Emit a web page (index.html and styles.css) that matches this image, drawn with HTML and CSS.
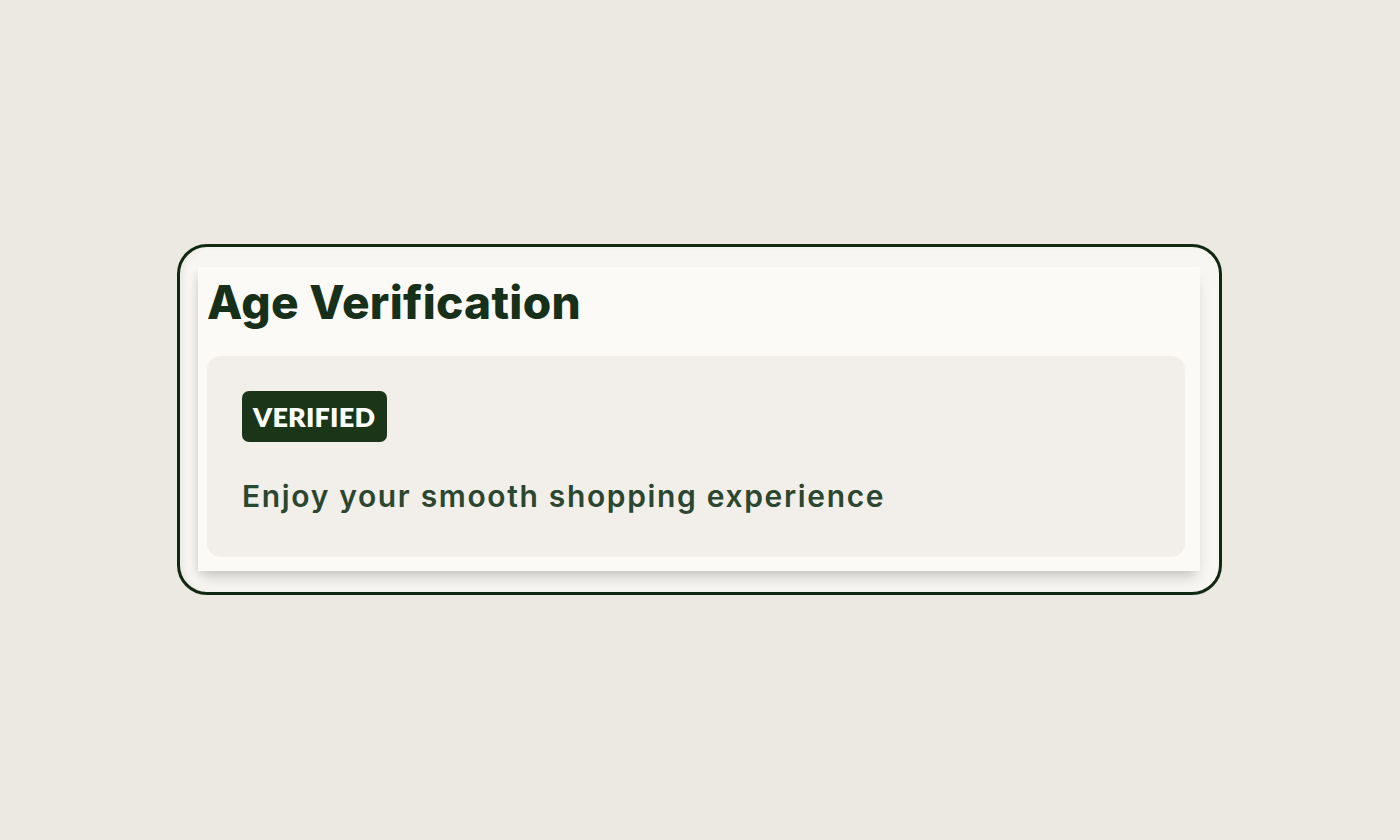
FILE: index.html
```html
<!DOCTYPE html>
<html lang="en">
<head>
<meta charset="utf-8">
<title>Age Verification</title>
<link rel="stylesheet" href="styles.css">
</head>
<body>
<main class="stage">
  <section class="frame">
    <div class="card">
      <h1 class="title">Age Verification</h1>
      <div class="panel">
        <span class="badge">VERIFIED</span>
        <p class="message">Enjoy your smooth shopping experience</p>
      </div>
    </div>
  </section>
</main>
</body>
</html>
```

FILE: styles.css
```css
* { box-sizing: border-box; }
html, body { margin: 0; padding: 0; }
body {
  width: 1400px;
  height: 840px;
  background: #ece8e2;
  font-family: Inter, "Noto Sans", sans-serif;
  overflow: hidden;
}
.stage {
  padding: 244px 0 0 177px;
}
.frame {
  width: 1045px;
  height: 351px;
  border: 3px solid #102a12;
  border-radius: 30px;
  background: #f8f6f2;
  padding: 20px 19px 21px 18px;
  box-shadow: inset 6px 0 8px -4px rgba(0,0,0,0.08);
}
.card {
  height: 304px;
  background: #fcfaf7;
  box-shadow: 0 10px 14px -4px rgba(0,0,0,0.16), -4px 4px 8px -2px rgba(0,0,0,0.08);
  padding: 9px 15px 14px 9px;
  display: flex;
  flex-direction: column;
}
.title {
  margin: 0;
  height: 80px;
  font-size: 46px;
  font-weight: 800;
  color: #16301a;
  line-height: 52px;
  letter-spacing: 0.3px;
}
.panel {
  flex: 1;
  background: #f2eeea;
  border-radius: 14px;
  padding: 35px 36px 0 35px;
  display: flex;
  flex-direction: column;
  align-items: flex-start;
}
.badge {
  display: inline-block;
  background: #1a3517;
  color: #ffffff;
  font-family: Lato, "Noto Sans", sans-serif;
  font-size: 27px;
  font-weight: 800;
  line-height: 51px;
  height: 51px;
  padding: 0 12px 0 11px;
  border-radius: 7px;
  letter-spacing: 0.2px;
}
.message {
  margin: 35px 0 0 0;
  font-size: 30px;
  font-weight: 600;
  color: #2b4730;
  letter-spacing: 1.65px;
  line-height: 38px;
}
```
